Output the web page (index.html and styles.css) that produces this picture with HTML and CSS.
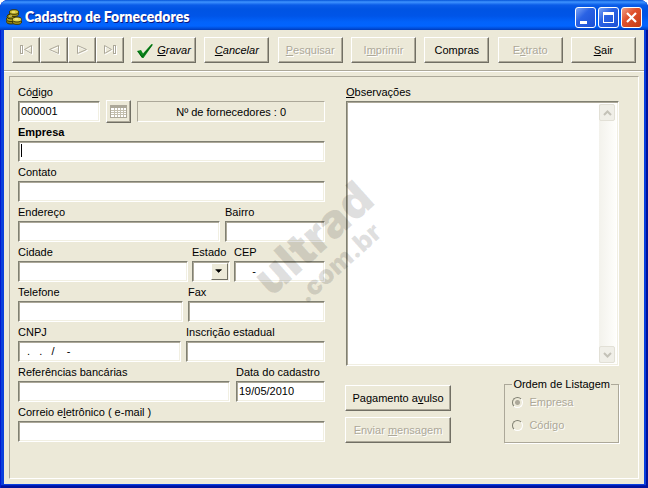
FILE: index.html
```
<!DOCTYPE html>
<html lang="pt-BR">
<head>
<meta charset="utf-8">
<title>Cadastro de Fornecedores</title>
<link rel="stylesheet" href="styles.css">
</head>
<body>
<div class="window">
  <header class="titlebar">
    <svg class="app-icon" width="16" height="16" viewBox="0 0 16 16" aria-hidden="true">
      <g stroke="#3a3408" stroke-width="1">
        <ellipse cx="5" cy="12.5" rx="4.5" ry="2.5" fill="#8f8410"/>
        <ellipse cx="5" cy="10" rx="4.500" ry="2.500" fill="#b5a81c"/>
        <ellipse cx="5" cy="7.500" rx="4" ry="2.500" fill="#8f8410"/>
        <ellipse cx="8" cy="5" rx="4.500" ry="2.500" fill="#a89a16"/>
        <ellipse cx="8" cy="3" rx="4.500" ry="2.300" fill="#d6c83a"/>
        <ellipse cx="11" cy="13" rx="4.500" ry="2.400" fill="#a89a16"/>
        <ellipse cx="11" cy="10.500" rx="4.500" ry="2.500" fill="#e0d552"/>
      </g>
      <path d="M6 3h3M3 7h3M9 10h3" stroke="#f7f0a0" fill="none"/>
    </svg>
    <h1 class="title">Cadastro de Fornecedores</h1>
    <div class="window-controls">
      <button class="control" aria-label="Minimizar"><svg width="19" height="19" viewBox="0 0 19 19"><path d="M4 13h7v3H4z" fill="#fff"/></svg></button>
      <button class="control" aria-label="Maximizar"><svg width="19" height="19" viewBox="0 0 19 19"><path d="M4 4h11v11H4zM5 7v7h9V7z" fill="#fff" fill-rule="evenodd"/></svg></button>
      <button class="control close" aria-label="Fechar"><svg width="19" height="19" viewBox="0 0 19 19"><path d="M5 5l9 9M14 5l-9 9" stroke="#fff" stroke-width="2.200" fill="none"/></svg></button>
    </div>
  </header>

  <nav class="toolbar">
    <div class="nav-buttons">
      <button class="button nav" disabled aria-label="Primeiro"><svg class="glyph" width="14" height="12" viewBox="0 0 14 12"><path d="M1.500 1v9M3.500 1v9M1 1.500h3M1 9.500h3M12.500 1.500v8L5.500 5.500z"/></svg></button>
      <button class="button nav" disabled aria-label="Anterior"><svg class="glyph" width="14" height="12" viewBox="0 0 14 12"><path d="M11.500 1.500v8L2.500 5.500z"/></svg></button>
      <button class="button nav" disabled aria-label="Próximo"><svg class="glyph" width="14" height="12" viewBox="0 0 14 12"><path d="M2.500 1.500v8l9-4z"/></svg></button>
      <button class="button nav" disabled aria-label="Último"><svg class="glyph" width="14" height="12" viewBox="0 0 14 12"><path d="M1.500 1.500v8l7-4zM10.500 1v9M12.500 1v9M10 1.500h3M10 9.500h3"/></svg></button>
    </div>
    <div class="actions">
      <button class="button action slanted"><svg width="18" height="16" viewBox="0 0 18 16" aria-hidden="true"><path d="M1 8l4-1 2 3.500L15.500 1 17 1.500 7.500 15H6z" fill="#0b8a1c"/><path d="M2 8l4 6L16 2" stroke="#056010" fill="none"/></svg><span><u>G</u>ravar</span></button>
      <button class="button action slanted"><span><u>C</u>ancelar</span></button>
      <button class="button action" disabled><span><u>P</u>esquisar</span></button>
      <button class="button action" disabled><span>I<u>m</u>primir</span></button>
      <button class="button action">Compras</button>
      <button class="button action" disabled><span>E<u>x</u>trato</span></button>
      <button class="button action"><span><u>S</u>air</span></button>
    </div>
  </nav>

  <main class="client">
    <form class="panel">
      <div class="fields">
        <div class="row row-code">
          <div class="field"><label for="codigo">Có<u>d</u>igo</label><input id="codigo" type="text" value="000001"></div>
          <button class="button grid-button" type="button" disabled aria-label="Tabela"><svg width="17" height="15" viewBox="0 0 17 15"><path d="M0 1h17v13H0z" fill="#aca899"/><path d="M1 4h15v9H1z" fill="#fff"/><path d="M1 6.500h15M1 8.500h15M1 10.500h15M4.500 4v9M7.500 4v9M10.500 4v9M13.500 4v9" stroke="#c3bfae"/></svg></button>
          <output class="count">Nº de fornecedores : 0</output>
        </div>
        <div class="field"><label class="strong" for="empresa">Empresa</label><input id="empresa" class="with-caret" type="text"></div>
        <div class="field"><label for="contato">Contato</label><input id="contato" type="text"></div>
        <div class="row row-address">
          <div class="field"><label for="endereco">Endereço</label><input id="endereco" type="text"></div>
          <div class="field"><label for="bairro">Bairro</label><input id="bairro" type="text"></div>
        </div>
        <div class="row row-city">
          <div class="field"><label for="cidade">Cidade</label><input id="cidade" type="text"></div>
          <div class="field"><label for="estado">Estado</label>
            <div class="select-box"><select id="estado"><option></option></select><svg class="drop" width="17" height="17" viewBox="0 0 17 17" aria-hidden="true"><path d="M4 6h7v1h-1v1h-1v1H8v1H7V9H6V8H5V7H4z"/></svg></div></div>
          <div class="field"><label for="cep">CEP</label><input id="cep" type="text" value="     -"></div>
        </div>
        <div class="row row-phone">
          <div class="field"><label for="telefone">Telefone</label><input id="telefone" type="text"></div>
          <div class="field"><label for="fax">Fax</label><input id="fax" type="text"></div>
        </div>
        <div class="row row-cnpj">
          <div class="field"><label for="cnpj">CNPJ</label><input id="cnpj" type="text" value="  .   .   /    -"></div>
          <div class="field"><label for="inscricao">Inscrição estadual</label><input id="inscricao" type="text"></div>
        </div>
        <div class="row row-bank">
          <div class="field"><label for="referencias">Referências bancárias</label><input id="referencias" type="text"></div>
          <div class="field"><label for="data">Data do cadastro</label><input id="data" type="text" value="19/05/2010"></div>
        </div>
        <div class="field"><label for="email">Correio e<u>l</u>etrônico ( e-mail )</label><input id="email" type="text"></div>
      </div>

      <div class="side">
        <label for="observacoes"><u>O</u>bservações</label>
        <div class="memo">
          <textarea id="observacoes"></textarea>
          <div class="scrollbar">
            <button class="scroll-button" type="button" disabled aria-label="Rolar para cima"><svg width="9" height="6" viewBox="0 0 9 6"><path d="M1 5l3.500-3.500L8 5"/></svg></button>
            <button class="scroll-button" type="button" disabled aria-label="Rolar para baixo"><svg width="9" height="6" viewBox="0 0 9 6"><path d="M1 1l3.500 3.500L8 1"/></svg></button>
          </div>
        </div>
        <div class="bottom">
          <div class="side-buttons">
            <button class="button" type="button"><span>Pagamento a<u>v</u>ulso</span></button>
            <button class="button" type="button" disabled><span>Enviar <u>m</u>ensagem</span></button>
          </div>
          <fieldset class="order">
            <legend>Ordem de Listagem</legend>
            <label class="option"><input type="radio" name="ordem" checked disabled>Empresa</label>
            <label class="option"><input type="radio" name="ordem" disabled>Código</label>
          </fieldset>
        </div>
      </div>
    </form>
  </main>
  <div class="watermark"><span class="mark-name">ultrad</span><span class="mark-domain">.com.br</span></div>
</div>
</body>
</html>
```
FILE: styles.css
```
* { box-sizing: border-box; }

body {
  margin: 0;
  background: #fff;
  font: 11px/13px "Liberation Sans", Arial, sans-serif;
  color: #000;
}

button, input, select, textarea { font: inherit; color: inherit; margin: 0; border-radius: 0; }
u { text-underline-offset: 1px; }

.window {
  position: relative;
  display: flex;
  flex-direction: column;
  min-height: 100vh;
  padding: 0 4px 4px;
  border-radius: 8px 8px 0 0;
  overflow: hidden;
  background: #0a3fdc;
  box-shadow: inset 1px 0 #0019cf, inset -2px -2px #00129c, inset 0 -3px #001cb8;
}

.titlebar {
  display: flex;
  align-items: center;
  height: 30px;
  margin: 0 -4px;
  padding: 4px 6px 0 6px;
  background: linear-gradient(#0453d8 0, #3f94ff 2px, #0a5ce8 5px, #0054e3 9px, #0055e8 16px, #0263fb 22px, #0264ff 26px, #0048d0 29px, #0038b8 30px);
}
.app-icon { margin-right: 3px; }
.title {
  flex: 1;
  margin: 0;
  color: #fff;
  font: 800 14px/18px Lato, sans-serif;
  text-shadow: 1px 1px #0a1883;
}
.window-controls { display: flex; gap: 2px; }
.control {
  width: 21px;
  height: 21px;
  padding: 0;
  border: 1px solid #fff;
  border-radius: 3px;
  background: linear-gradient(135deg, #7ba4f5, #2a62e4 40%, #1c50d4);
}
.control svg { display: block; }
.close { background: linear-gradient(135deg, #f0a088, #e0522e 40%, #c43a14); }

.toolbar {
  display: flex;
  gap: 7px;
  padding: 7px 8px;
  height: 41px;
  background: #ece9d8;
  border-bottom: 1px solid #aca899;
}
.nav-buttons { display: flex; }
.actions { flex: 1; display: flex; justify-content: space-between; }

.button {
  display: flex;
  align-items: center;
  justify-content: center;
  height: 26px;
  padding: 0;
  border: 1px solid;
  border-color: #fff #716f64 #716f64 #fff;
  background: #ece9d8;
  box-shadow: inset -1px -1px #aca899;
}
.button:disabled { color: #aca899; text-shadow: 1px 1px #fff; }
.nav { width: 28px; }
.action { width: 65px; gap: 3px; padding-top: 1px; }
.slanted { font-style: italic; }
.glyph { fill: none; stroke: #aca899; filter: drop-shadow(1px 1px #fff); }

.client {
  flex: 1;
  display: flex;
  padding: 4px 5px 5px;
  background: #ece9d8;
  border-top: 1px solid #fff;
}
.panel {
  flex: 1;
  display: grid;
  grid-template-columns: 307fr 273fr;
  column-gap: 21px;
  align-items: start;
  padding: 5px 19px 5px 8px;
  border: 1px solid;
  border-color: #aca899 #fff #fff #aca899;
}

.row { display: grid; column-gap: 5px; }
.row-code { grid-template-columns: 82fr 25px 187fr; column-gap: 6px; align-items: end; }
.row-address { grid-template-columns: 202fr 100fr; }
.row-city { grid-template-columns: 170fr 38px 91fr; column-gap: 4px; }
.row-phone { grid-template-columns: 165fr 137fr; }
.row-cnpj { grid-template-columns: 163fr 139fr; }
.row-bank { grid-template-columns: 212fr 89fr; column-gap: 6px; }

label { display: block; height: 19px; line-height: 21px; }
.strong { font-weight: bold; }

.field input, .select-box, .memo {
  border: 1px solid;
  border-color: #808072 #fff #fff #808072;
  box-shadow: inset 1px 1px #aca899, inset -1px -1px #f1efe2;
  background: #fff;
}
.field input {
  display: block;
  width: 100%;
  height: 21px;
  padding: 0 2px 1px;
  outline: 0;
}
.field .with-caret { background: linear-gradient(#000, #000) 2px 2px / 1px 13px no-repeat #fff; }

.grid-button { height: 23px; margin-bottom: -1px; }
.count {
  height: 21px;
  line-height: 20px;
  text-align: center;
  border: 1px solid;
  border-color: #aca899 #fff #fff #aca899;
}

.select-box { position: relative; height: 21px; padding: 2px; }
.select-box select { display: block; appearance: none; width: 100%; height: 15px; border: 0; padding: 0; background: #fff; outline: 0; }
.drop {
  position: absolute;
  top: 1px;
  right: 1px;
  background: #ece9d8;
  border: 1px solid;
  border-color: #fff #716f64 #716f64 #fff;
  pointer-events: none;
}

.memo { display: flex; height: 265px; padding: 2px; }
.memo textarea { flex: 1; min-width: 0; border: 0; padding: 2px; resize: none; outline: 0; background: transparent; }
.scrollbar { display: flex; flex-direction: column; justify-content: space-between; width: 17px; background: linear-gradient(90deg, #f3f2ec, #fefefb); }
.scroll-button {
  display: flex;
  align-items: center;
  justify-content: center;
  width: 16px;
  height: 17px;
  padding: 0;
  border: 1px solid #e2e0d6;
  border-radius: 2px;
  background: #f0efe8;
}
.scroll-button path { fill: none; stroke: #c4c2b8; stroke-width: 2; }

.bottom { display: flex; justify-content: space-between; align-items: end; margin-top: 12px; }
.side-buttons { display: grid; gap: 6px; width: 106px; margin-left: -1px; }
.order {
  width: 113px;
  height: 65px;
  margin: 0;
  padding: 0 7px;
  border: 1px solid #aca899;
  box-shadow: 1px 1px #fff;
}
.order legend { padding: 0 1px; white-space: nowrap; }
.option {
  display: flex;
  align-items: center;
  gap: 6px;
  height: 23px;
  color: #aca899;
  text-shadow: 1px 1px #fff;
}
.option input {
  appearance: none;
  width: 11px;
  height: 11px;
  border: 1px solid;
  border-color: #808072 #fff #fff #808072;
  border-radius: 50%;
}
.option input:checked { background: radial-gradient(circle, #aca899 2px, transparent 3px); }

.watermark {
  position: absolute;
  left: 252px;
  top: 213px;
  transform: rotate(-42deg);
  display: flex;
  flex-direction: column;
  align-items: end;
  color: rgb(0 0 0 / 12%);
  font-family: Inter, sans-serif;
  font-weight: 900;
  pointer-events: none;
}
.mark-name { font-size: 47px; line-height: 42px; }
.mark-domain { margin-right: 16px; font-size: 26px; line-height: 30px; }
```
